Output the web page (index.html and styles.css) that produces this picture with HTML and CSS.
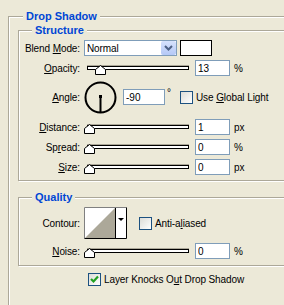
FILE: index.html
```html
<!DOCTYPE html>
<html lang="en">
<head>
  <meta charset="UTF-8">
  <title>Drop Shadow</title>
  <link rel="stylesheet" href="styles.css">
</head>
<body>

<fieldset class="group outer">
  <legend>Drop Shadow</legend>

  <fieldset class="group inner">
    <legend>Structure</legend>

    <div class="row">
      <label class="lbl">Blend <u>M</u>ode:</label>
      <div class="select">
        <span class="select-text">Normal</span>
        <span class="select-btn">
          <svg width="9" height="6" viewBox="0 0 9 6"><path d="M1 1 L4.5 4.5 L8 1" fill="none" stroke="#4d6185" stroke-width="2"/></svg>
        </span>
      </div>
      <span class="swatch"></span>
    </div>

    <div class="row">
      <label class="lbl"><u>O</u>pacity:</label>
      <div class="slider">
        <div class="track"></div>
        <svg class="thumb" style="left: 11px" width="11" height="10" viewBox="0 0 11 10"><path d="M0.5 9.5 V4.5 L5.5 0.5 L10.5 4.5 V9.5 Z" fill="#fff" stroke="#000"/></svg>
      </div>
      <input class="num" value="13"><span class="unit">%</span>
    </div>

    <div class="row angle-row">
      <label class="lbl"><u>A</u>ngle:</label>
      <svg class="dial" width="33" height="33" viewBox="0 0 33 33">
        <circle cx="16.5" cy="16.5" r="15" fill="none" stroke="#000" stroke-width="2"/>
        <rect x="15" y="14" width="3" height="3" fill="#000"/>
        <line x1="16.5" y1="16" x2="16.5" y2="31" stroke="#000" stroke-width="2"/>
      </svg>
      <input class="num angle" value="-90"><span class="deg">°</span>
      <label class="check"><span class="box"></span><span>Use <u>G</u>lobal Light</span></label>
    </div>

    <div class="row">
      <label class="lbl"><u>D</u>istance:</label>
      <div class="slider">
        <div class="track"></div>
        <svg class="thumb" style="left: 0px" width="11" height="10" viewBox="0 0 11 10"><path d="M0.5 9.5 V4.5 L5.5 0.5 L10.5 4.5 V9.5 Z" fill="#fff" stroke="#000"/></svg>
      </div>
      <input class="num" value="1"><span class="unit">px</span>
    </div>

    <div class="row">
      <label class="lbl">Sp<u>r</u>ead:</label>
      <div class="slider">
        <div class="track"></div>
        <svg class="thumb" style="left: 0px" width="11" height="10" viewBox="0 0 11 10"><path d="M0.5 9.5 V4.5 L5.5 0.5 L10.5 4.5 V9.5 Z" fill="#fff" stroke="#000"/></svg>
      </div>
      <input class="num" value="0"><span class="unit">%</span>
    </div>

    <div class="row">
      <label class="lbl"><u>S</u>ize:</label>
      <div class="slider">
        <div class="track"></div>
        <svg class="thumb" style="left: 0px" width="11" height="10" viewBox="0 0 11 10"><path d="M0.5 9.5 V4.5 L5.5 0.5 L10.5 4.5 V9.5 Z" fill="#fff" stroke="#000"/></svg>
      </div>
      <input class="num" value="0"><span class="unit">px</span>
    </div>
  </fieldset>

  <fieldset class="group inner quality">
    <legend>Quality</legend>

    <div class="row contour-row">
      <label class="lbl">Contour:</label>
      <svg class="contour" width="43" height="32" viewBox="0 0 43 32">
        <rect x="0" y="0" width="43" height="32" fill="#fff"/>
        <path d="M1 31 L31 1 V31 Z" fill="#aca899"/>
        <path d="M0.5 31.5 V0.5 H42.5" fill="none" stroke="#808080"/>
        <path d="M42.5 0.5 V31.5 H0.5" fill="none" stroke="#000"/>
        <line x1="31.5" y1="1" x2="31.5" y2="31" stroke="#000"/>
        <path d="M34 11 H40 L37 14 Z" fill="#000"/>
      </svg>
      <label class="check anti"><span class="box"></span><span>Anti-a<u>l</u>iased</span></label>
    </div>

    <div class="row">
      <label class="lbl"><u>N</u>oise:</label>
      <div class="slider">
        <div class="track"></div>
        <svg class="thumb" style="left: 0px" width="11" height="10" viewBox="0 0 11 10"><path d="M0.5 9.5 V4.5 L5.5 0.5 L10.5 4.5 V9.5 Z" fill="#fff" stroke="#000"/></svg>
      </div>
      <input class="num" value="0"><span class="unit">%</span>
    </div>
  </fieldset>

  <div class="row knock-row">
    <label class="check"><span class="box checked">
      <svg width="11" height="11" viewBox="0 0 11 11"><path d="M2 5 L4.5 7.5 L9 2.5" fill="none" stroke="#21a121" stroke-width="2.2"/></svg>
    </span><span>Layer Knocks O<u>u</u>t Drop Shadow</span></label>
  </div>
</fieldset>

</body>
</html>
```

FILE: styles.css
```css
body {
  margin: 0;
  background: #ece9d8;
  font-family: 'Liberation Sans', Arial, sans-serif;
  font-size: 10px;
  letter-spacing: -0.1px;
  color: #000;
  overflow: hidden;
  width: 284px;
  height: 305px;
}

.group {
  margin: 0;
  border: 1px solid #aca899;
  box-shadow: inset 1px 1px 0 #fff, 1px 1px 0 #fff;
  min-width: 0;
}

.group legend {
  font-size: 11px;
  font-weight: bold;
  letter-spacing: 0;
  line-height: 13px;
  color: #0046d5;
  padding: 0 3px;
  background: #ece9d8;
}

.outer {
  margin: 10px 0 0 8px;
  width: 340px;
  height: 400px;
  padding: 1px 0 0 9px;
  box-sizing: border-box;
}

.outer > legend {
  margin-left: 5px;
}

.inner {
  padding: 3px 0 5px 0;
}

.inner > legend {
  margin-left: 13px;
}

.quality {
  margin-top: 10px;
  padding-bottom: 6px;
}

.row {
  display: flex;
  align-items: center;
  height: 16px;
  margin-bottom: 4px;
}

.row:last-child {
  margin-bottom: 0;
}

.lbl {
  width: 61px;
  margin-right: 4px;
  text-align: right;
  white-space: nowrap;
}

.select {
  width: 93px;
  height: 16px;
  box-sizing: border-box;
  border: 1px solid #7f9db9;
  background: #fff;
  display: flex;
  align-items: center;
  justify-content: space-between;
}

.select-text {
  padding-left: 2px;
}

.select-btn {
  width: 15px;
  height: 14px;
  border-radius: 2px;
  background: linear-gradient(#d6e2fc, #b4c8f6);
  display: flex;
  align-items: center;
  justify-content: center;
}

.swatch {
  width: 32px;
  height: 16px;
  margin-left: 3px;
  box-sizing: border-box;
  border: 1px solid #000;
  background: #fff;
}

.slider {
  position: relative;
  width: 103px;
  height: 16px;
}

.track {
  margin: 6px 0 0 3px;
  width: 100px;
  height: 2px;
  border: 1px solid #000;
  background: #fff;
  box-shadow: 0 -1px 0 #aca899;
}

.thumb {
  position: absolute;
  top: 5px;
}

.num {
  margin: 0 0 0 8px;
  width: 35px;
  height: 16px;
  box-sizing: border-box;
  border: 1px solid #7f9db9;
  padding: 0 2px;
  font: inherit;
  background: #fff;
  outline: none;
}

.unit {
  margin-left: 4px;
}

.angle-row {
  height: 34px;
  margin-bottom: 5px;
}

.dial {
  display: block;
}

.num.angle {
  margin-left: 6px;
  width: 42px;
}

.deg {
  width: 13px;
  padding-left: 2px;
  align-self: flex-start;
  margin-top: 7px;
}

.check {
  display: flex;
  align-items: center;
  white-space: nowrap;
}

.box {
  width: 13px;
  height: 13px;
  box-sizing: border-box;
  border: 1px solid #1c5180;
  background: linear-gradient(135deg, #dcdcd7, #fff);
  margin-right: 3px;
  display: flex;
  align-items: center;
  justify-content: center;
}

.contour-row {
  height: 32px;
}

.contour {
  display: block;
}

.anti {
  margin-left: 12px;
}

.knock-row {
  margin-top: 5px;
  padding-left: 70px;
}
```
